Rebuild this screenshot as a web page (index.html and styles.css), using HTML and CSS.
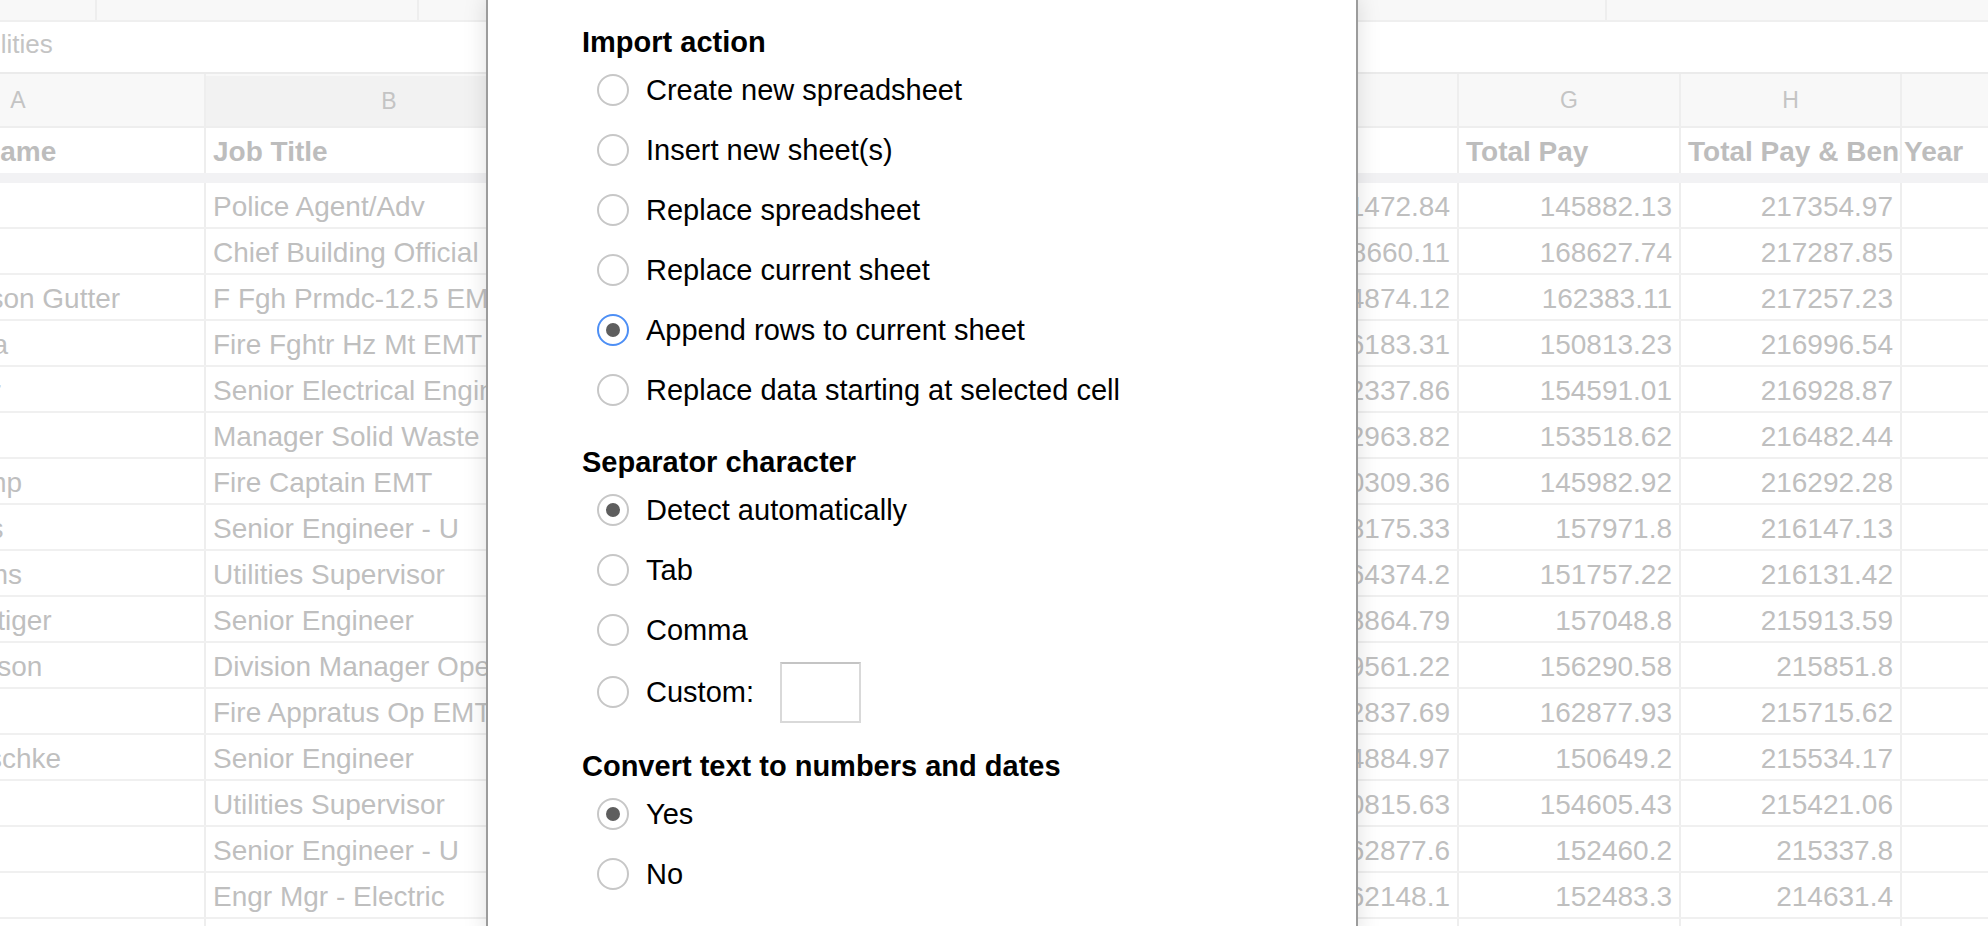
FILE: index.html
```html
<!DOCTYPE html>
<html lang="en">
<head>
<meta charset="utf-8">
<title>Import file</title>
<link rel="stylesheet" href="styles.css">
</head>
<body>
<div class="app">
  <div class="toolbar">
    <div class="seg seg1"></div>
    <div class="seg seg2"></div>
    <div class="seg seg3"></div>
    <div class="seg seg4"></div>
  </div>
  <div class="formula"><span class="formula-text">Utilities</span></div>

  <div class="sheet">
    <div class="row colhead">
      <div class="cell">A</div>
      <div class="cell sel">B</div>
      <div class="cell">C</div>
      <div class="cell">D</div>
      <div class="cell">E</div>
      <div class="cell">F</div>
      <div class="cell">G</div>
      <div class="cell">H</div>
      <div class="cell">I</div>
    </div>
    <div class="row titles">
      <div class="cell first">Employee Name</div>
      <div class="cell">Job Title</div>
      <div class="cell">Base Pay</div>
      <div class="cell">Overtime Pay</div>
      <div class="cell">Other Pay</div>
      <div class="cell">Benefits</div>
      <div class="cell">Total Pay</div>
      <div class="cell">Total Pay &amp; Benefits</div>
      <div class="cell last">Year</div>
    </div>
    <div class="freeze"></div>

    <div class="row data"><div class="cell first">Gary Lee</div><div class="cell">Police Agent/Adv</div><div class="cell"></div><div class="cell"></div><div class="cell"></div><div class="cell num">71472.84</div><div class="cell num">145882.13</div><div class="cell num">217354.97</div><div class="cell last"></div></div>
    <div class="row data"><div class="cell first">John Hart</div><div class="cell">Chief Building Official</div><div class="cell"></div><div class="cell"></div><div class="cell"></div><div class="cell num">48660.11</div><div class="cell num">168627.74</div><div class="cell num">217287.85</div><div class="cell last"></div></div>
    <div class="row data"><div class="cell first">Robert Jackson Gutter</div><div class="cell">F Fgh Prmdc-12.5 EMT</div><div class="cell"></div><div class="cell"></div><div class="cell"></div><div class="cell num">54874.12</div><div class="cell num">162383.11</div><div class="cell num">217257.23</div><div class="cell last"></div></div>
    <div class="row data"><div class="cell first">Mario Pereira</div><div class="cell">Fire Fghtr Hz Mt EMT</div><div class="cell"></div><div class="cell"></div><div class="cell"></div><div class="cell num">66183.31</div><div class="cell num">150813.23</div><div class="cell num">216996.54</div><div class="cell last"></div></div>
    <div class="row data"><div class="cell first">Peter Walker</div><div class="cell">Senior Electrical Engineer</div><div class="cell"></div><div class="cell"></div><div class="cell"></div><div class="cell num">62337.86</div><div class="cell num">154591.01</div><div class="cell num">216928.87</div><div class="cell last"></div></div>
    <div class="row data"><div class="cell first">Brian Wong</div><div class="cell">Manager Solid Waste</div><div class="cell"></div><div class="cell"></div><div class="cell"></div><div class="cell num">62963.82</div><div class="cell num">153518.62</div><div class="cell num">216482.44</div><div class="cell last"></div></div>
    <div class="row data"><div class="cell first">Thomas Kemp</div><div class="cell">Fire Captain EMT</div><div class="cell"></div><div class="cell"></div><div class="cell"></div><div class="cell num">70309.36</div><div class="cell num">145982.92</div><div class="cell num">216292.28</div><div class="cell last"></div></div>
    <div class="row data"><div class="cell first">Steve Collins</div><div class="cell">Senior Engineer - U</div><div class="cell"></div><div class="cell"></div><div class="cell"></div><div class="cell num">58175.33</div><div class="cell num">157971.8</div><div class="cell num">216147.13</div><div class="cell last"></div></div>
    <div class="row data"><div class="cell first">Ronald Adams</div><div class="cell">Utilities Supervisor</div><div class="cell"></div><div class="cell"></div><div class="cell"></div><div class="cell num">64374.2</div><div class="cell num">151757.22</div><div class="cell num">216131.42</div><div class="cell last"></div></div>
    <div class="row data"><div class="cell first">Matthew Hettiger</div><div class="cell">Senior Engineer</div><div class="cell"></div><div class="cell"></div><div class="cell"></div><div class="cell num">58864.79</div><div class="cell num">157048.8</div><div class="cell num">215913.59</div><div class="cell last"></div></div>
    <div class="row data"><div class="cell first">Donald Johnson</div><div class="cell">Division Manager Operations</div><div class="cell"></div><div class="cell"></div><div class="cell"></div><div class="cell num">59561.22</div><div class="cell num">156290.58</div><div class="cell num">215851.8</div><div class="cell last"></div></div>
    <div class="row data"><div class="cell first">Paul Chan</div><div class="cell">Fire Appratus Op EMT</div><div class="cell"></div><div class="cell"></div><div class="cell"></div><div class="cell num">52837.69</div><div class="cell num">162877.93</div><div class="cell num">215715.62</div><div class="cell last"></div></div>
    <div class="row data"><div class="cell first">Kenneth Ruschke</div><div class="cell">Senior Engineer</div><div class="cell"></div><div class="cell"></div><div class="cell"></div><div class="cell num">64884.97</div><div class="cell num">150649.2</div><div class="cell num">215534.17</div><div class="cell last"></div></div>
    <div class="row data"><div class="cell first">David Lim</div><div class="cell">Utilities Supervisor</div><div class="cell"></div><div class="cell"></div><div class="cell"></div><div class="cell num">60815.63</div><div class="cell num">154605.43</div><div class="cell num">215421.06</div><div class="cell last"></div></div>
    <div class="row data"><div class="cell first">Mark Tse</div><div class="cell">Senior Engineer - U</div><div class="cell"></div><div class="cell"></div><div class="cell"></div><div class="cell num">62877.6</div><div class="cell num">152460.2</div><div class="cell num">215337.8</div><div class="cell last"></div></div>
    <div class="row data"><div class="cell first">Eric Fong</div><div class="cell">Engr Mgr - Electric</div><div class="cell"></div><div class="cell"></div><div class="cell"></div><div class="cell num">62148.1</div><div class="cell num">152483.3</div><div class="cell num">214631.4</div><div class="cell last"></div></div>
    <div class="row data"><div class="cell first"></div><div class="cell"></div><div class="cell"></div><div class="cell"></div><div class="cell"></div><div class="cell num"></div><div class="cell num"></div><div class="cell num"></div><div class="cell last"></div></div>
  </div>

  <div class="dialog">
    <div class="section">
      <div class="heading">Import action</div>
      <div class="option"><span class="radio"></span><span class="label">Create new spreadsheet</span></div>
      <div class="option"><span class="radio"></span><span class="label">Insert new sheet(s)</span></div>
      <div class="option"><span class="radio"></span><span class="label">Replace spreadsheet</span></div>
      <div class="option"><span class="radio"></span><span class="label">Replace current sheet</span></div>
      <div class="option"><span class="radio checked focused"></span><span class="label">Append rows to current sheet</span></div>
      <div class="option"><span class="radio"></span><span class="label">Replace data starting at selected cell</span></div>
    </div>
    <div class="section">
      <div class="heading">Separator character</div>
      <div class="option"><span class="radio checked"></span><span class="label">Detect automatically</span></div>
      <div class="option"><span class="radio"></span><span class="label">Tab</span></div>
      <div class="option"><span class="radio"></span><span class="label">Comma</span></div>
      <div class="option custom"><span class="radio"></span><span class="label">Custom:</span><span class="custom-input"></span></div>
    </div>
    <div class="section">
      <div class="heading">Convert text to numbers and dates</div>
      <div class="option"><span class="radio checked"></span><span class="label">Yes</span></div>
      <div class="option"><span class="radio"></span><span class="label">No</span></div>
    </div>
  </div>
</div>
</body>
</html>
```

FILE: styles.css
```css
html, body {
  margin: 0;
  padding: 0;
  background: #ffffff;
}

body {
  width: 1988px;
  height: 926px;
  overflow: hidden;
  font-family: "Liberation Sans", Arial, sans-serif;
}

.app {
  position: relative;
  width: 1988px;
  height: 926px;
  overflow: hidden;
}

/* top toolbar strip */
.toolbar {
  display: flex;
  height: 22px;
  box-sizing: border-box;
  background: #f8f8f8;
  border-bottom: 2px solid #efefef;
}

.seg {
  box-sizing: border-box;
  height: 100%;
  border-right: 2px solid #eeeeee;
}

.seg1 { width: 97px; }
.seg2 { width: 322px; }
.seg3 { width: 1188px; }
.seg4 { flex: 1; border-right: none; }

/* formula bar */
.formula {
  height: 52px;
  box-sizing: border-box;
  border-bottom: 2px solid #ebebeb;
  padding-top: 7px;
  font-size: 26px;
  line-height: 30px;
  color: #c4c4c4;
  white-space: nowrap;
}

.formula-text {
  display: inline-block;
  margin-left: -31px;
}

/* sheet grid */
.sheet {
  margin-left: -168px;
  width: 2310px;
}

.row {
  display: grid;
  grid-template-columns: 374px 368px 221px 221px 221px 222px 222px 221px 240px;
}

.cell {
  box-sizing: border-box;
  border-right: 2px solid #eeeeee;
  overflow: hidden;
  white-space: nowrap;
  padding: 0 7px;
}

.cell.first { padding-left: 8px; }
.cell.last { padding-left: 1px; border-right: none; }
.cell.num { text-align: right; }

.colhead {
  height: 54px;
  box-sizing: border-box;
  background: #f8f8f8;
  border-bottom: 2px solid #eeeeee;
}

.colhead .cell {
  display: flex;
  align-items: center;
  justify-content: center;
  font-size: 23px;
  color: #c4c4c4;
}

.colhead .cell.sel {
  background: #f2f2f2;
  margin-top: 2px;
}

.titles {
  height: 45px;
}

.titles .cell {
  padding-top: 8px;
  font-size: 28px;
  line-height: 32px;
  font-weight: bold;
  color: #bdbdbd;
}

.titles .cell.last { padding-left: 2px; }

.freeze {
  height: 10px;
  background: #f2f2f4;
}

.data {
  height: 46px;
  box-sizing: border-box;
  border-bottom: 2px solid #f0f0f0;
}

.data .cell {
  padding-top: 8px;
  font-size: 28px;
  line-height: 32px;
  color: #bfbfbf;
}

/* modal dialog */
.dialog {
  position: absolute;
  left: 486px;
  top: -4px;
  width: 872px;
  height: 940px;
  box-sizing: border-box;
  background: #ffffff;
  border: 2px solid #9c9c9c;
  box-shadow: 0 0 22px rgba(0, 0, 0, 0.13);
  padding: 26px 0 0 94px;
  color: #000000;
  font-size: 29px;
}

.section + .section {
  margin-top: 24px;
}

.heading {
  font-weight: bold;
  line-height: 36px;
  height: 36px;
}

.option {
  display: flex;
  align-items: center;
  height: 60px;
  padding-left: 15px;
}

.option.custom {
  height: 64px;
}

.label {
  line-height: 36px;
  white-space: nowrap;
}

.radio {
  position: relative;
  flex: none;
  width: 32px;
  height: 32px;
  box-sizing: border-box;
  border: 2px solid #c7c7c7;
  border-radius: 50%;
  background: #ffffff;
  margin-right: 17px;
}

.radio.checked::after {
  content: "";
  position: absolute;
  left: 7px;
  top: 7px;
  width: 14px;
  height: 14px;
  border-radius: 50%;
  background: #5e5e5e;
}

.radio.focused {
  border-color: #4d8ff5;
}

.custom-input {
  display: block;
  flex: none;
  width: 81px;
  height: 61px;
  box-sizing: border-box;
  margin-left: 26px;
  border: 2px solid #d9d9d9;
  border-top-color: #c4c4c4;
  background: #ffffff;
}
```
